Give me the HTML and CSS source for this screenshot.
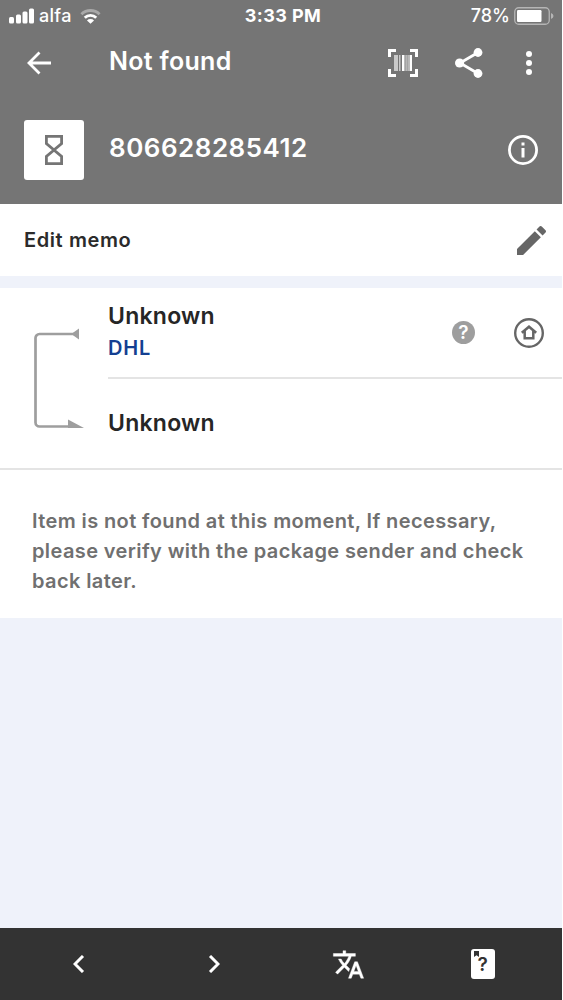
FILE: index.html
```html
<!DOCTYPE html>
<html lang="en">
<head>
    <meta charset="UTF-8">
    <meta name="viewport" content="width=device-width, initial-scale=1.0">
    <title>Not found</title>
    <link rel="stylesheet" href="styles.css">
</head>
<body>
    <div class="app">
        <header class="header">
            <div class="status-bar">
                <div class="carrier">
                    <svg width="26" height="16" viewBox="0 0 26 16" fill="#fff">
                        <rect x="0" y="9" width="5" height="6.5" rx="1.5"/>
                        <rect x="7" y="6.5" width="5" height="9" rx="1.5"/>
                        <rect x="13.5" y="3.5" width="5" height="12" rx="1.5"/>
                        <rect x="20" y="0.5" width="5" height="15" rx="1.5"/>
                    </svg>
                    <span class="carrier-name">alfa</span>
                    <svg class="wifi" width="21" height="16" viewBox="0 0 22 16" fill="none" stroke="#fff" stroke-width="3">
                        <path d="M1.5 6.2a13.5 13.5 0 0 1 19 0" stroke="#a9a9a9"/>
                        <path d="M5 9.8a8.5 8.5 0 0 1 12 0"/>
                        <path d="M7.3 12.6a5.3 5.3 0 0 1 7.4 0L11 16z" fill="#fff" stroke="none"/>
                    </svg>
                </div>
                <span class="clock">3:33 PM</span>
                <div class="battery">
                    <span class="battery-level">78%</span>
                    <svg width="40" height="18" viewBox="0 0 40 18">
                        <rect x="0.75" y="0.75" width="34.5" height="16.5" rx="4" fill="none" stroke="#b5b5b5" stroke-width="1.3"/>
                        <rect x="3" y="3" width="24.5" height="12" rx="1.2" fill="#fff"/>
                        <path d="M37 6q2.5 1 2.5 3t-2.5 3z" fill="#b5b5b5"/>
                    </svg>
                </div>
            </div>

            <div class="toolbar">
                <svg class="back" width="26" height="26" viewBox="0 0 26 26" fill="none" stroke="#fff" stroke-width="2.8">
                    <path d="M25 13H3M13.500 2.500L3 13l10.500 10.500"/>
                </svg>
                <h1 class="title">Not found</h1>
                <svg class="barcode" width="30" height="28" viewBox="0 0 30 28">
                    <path d="M1.5 8V1.5H8M22 1.5h6.5V8M28.5 20v6.5H22M8 26.5H1.5V20" fill="none" stroke="#fff" stroke-width="3"/>
                    <path d="M6 6h4v16H6zM11 6h1.5v16H11z" fill="#c9c9c9"/>
                    <path d="M14 6h2.5v16H14zM21.5 6H24v16h-2.5z" fill="#fff"/>
                    <path d="M17.5 6h1.2v16h-1.2zM19.5 6h1.2v16h-1.2z" fill="#d5d5d5"/>
                </svg>
                <svg class="share" width="28" height="30" viewBox="0 0 28 30" fill="#fff">
                    <path d="M23 4.5L5 15l18 10.5" fill="none" stroke="#fff" stroke-width="2.8"/>
                    <circle cx="23" cy="4.5" r="4.4"/>
                    <circle cx="4.6" cy="15" r="4.6"/>
                    <circle cx="23" cy="25.5" r="4.4"/>
                </svg>
                <svg class="more" width="6" height="26" viewBox="0 0 6 26" fill="#fff">
                    <circle cx="3" cy="4" r="3"/>
                    <circle cx="3" cy="13" r="3"/>
                    <circle cx="3" cy="22" r="3"/>
                </svg>
            </div>

            <div class="tracking">
                <div class="status-icon">
                    <svg width="18" height="30" viewBox="0 0 18 30" fill="none" stroke="#757575" stroke-width="2.8">
                        <path d="M1.4 1.4h15.2v7.2L9 15l7.6 6.4v7.2H1.4v-7.2L9 15 1.4 8.6z"/>
                    </svg>
                </div>
                <span class="number">806628285412</span>
                <svg class="info" width="30" height="30" viewBox="0 0 30 30">
                    <circle cx="15" cy="15" r="13.6" fill="none" stroke="#fff" stroke-width="2.8"/>
                    <path d="M13.5 7.5h3v3h-3zM13.5 13h3v9.500h-3z" fill="#fff"/>
                </svg>
            </div>
        </header>

        <div class="memo">
            <span>Edit memo</span>
            <svg width="29" height="29" viewBox="3 3 18 18" fill="#666">
                <path d="M3 17.25V21h3.75L17.81 9.94l-3.75-3.75L3 17.25zM20.71 7.04c.39-.39.39-1.02 0-1.41l-2.34-2.34c-.39-.39-1.02-.39-1.41 0l-1.83 1.83 3.75 3.75 1.83-1.83z"/>
            </svg>
        </div>

        <section class="route">
            <svg class="route-line" width="50" height="100" viewBox="0 0 50 100">
                <path d="M43 6H5.500a4 4 0 0 0-4 4V94.500a4 4 0 0 0 4 4H38" fill="none" stroke="#9e9e9e" stroke-width="2.700"/>
                <path d="M45 .5v11L39 7.300V4.700zM34 91.500l16 8.400H34z" fill="#9e9e9e"/>
            </svg>
            <div class="stops">
                <div class="stop origin">
                    <div class="stop-text">
                        <div class="place">Unknown</div>
                        <div class="courier">DHL</div>
                    </div>
                    <div class="help">?</div>
                    <svg class="home" width="30" height="30" viewBox="0 0 30 30" fill="none" stroke="#666">
                        <circle cx="15" cy="15" r="13.800" stroke-width="2.400"/>
                        <path d="M7.800 14.800L15 8.700l7.200 6.100M10.700 13v7.200h8.600V13" stroke-width="2.500"/>
                    </svg>
                </div>
                <div class="stop destination">
                    <div class="place">Unknown</div>
                </div>
            </div>
        </section>

        <p class="message">Item is not found at this moment, If necessary,<br>please verify with the package sender and check<br>back later.</p>

        <nav class="bottom-nav">
            <div class="nav-item">
                <svg width="12" height="18" viewBox="0 0 12 18" fill="none" stroke="#fff" stroke-width="3">
                    <path d="M10 1L2 9l8 8"/>
                </svg>
            </div>
            <div class="nav-item">
                <svg width="12" height="18" viewBox="0 0 12 18" fill="none" stroke="#fff" stroke-width="3">
                    <path d="M2 1l8 8-8 8"/>
                </svg>
            </div>
            <div class="nav-item">
                <svg width="33" height="33" viewBox="0 0 24 24" fill="#fff" stroke="#fff" stroke-width="0.3">
                    <path d="M12.87 15.07l-2.54-2.51.03-.03c1.74-1.94 2.98-4.17 3.71-6.53H17V4h-7V2H8v2H1v1.99h11.17C11.5 7.92 10.44 9.75 9 11.35 8.07 10.32 7.3 9.19 6.69 8h-2c.73 1.63 1.73 3.17 2.98 4.56l-5.09 5.02L4 19l5-5 3.11 3.11.76-2.04zM18.5 10h-2L12 22h2l1.12-3h4.75L21 22h2l-4.5-12zm-2.62 7l1.62-4.33L19.12 17h-3.24z"/>
                </svg>
            </div>
            <div class="nav-item">
                <div class="manual">
                    <svg class="bookmark" width="5" height="6" viewBox="0 0 5 6"><path d="M0 0h5v6L2.5 4.2 0 6z" fill="#333"/></svg>
                    ?
                </div>
            </div>
        </nav>
    </div>
</body>
</html>
```
FILE: styles.css
```css
body {
    margin: 0;
    background-color: #fff;
    font-family: Inter, "Liberation Sans", sans-serif;
    font-weight: 600;
}
svg {
    display: block;
    flex-shrink: 0;
}
.app {
    width: 562px;
    height: 1000px;
    display: flex;
    flex-direction: column;
    background-color: #eff2fa;
}

/* Header */
.header {
    height: 204px;
    background-color: #757575;
    color: #fff;
}
.status-bar {
    height: 31px;
    display: grid;
    grid-template-columns: 1fr auto 1fr;
    align-items: center;
    padding: 0 8px 0 9px;
    font-size: 18px;
}
.carrier, .battery {
    display: flex;
    align-items: center;
}
.carrier-name {
    margin-left: 4px;
    font-weight: 500;
    letter-spacing: 0.3px;
}
.wifi {
    margin-left: 8px;
}
.clock {
    font-weight: 700;
    letter-spacing: 0.4px;
    margin-left: 3px;
}
.battery {
    justify-content: flex-end;
}
.battery-level {
    font-weight: 500;
    margin-right: 4px;
}
.toolbar {
    height: 64px;
    display: flex;
    align-items: center;
    padding: 0 30px 0 26px;
}
.title {
    margin: -5px auto 0 57px;
    font-size: 25px;
    font-weight: 600;
    letter-spacing: 0.3px;
}
.share {
    margin: 0 43px 0 37px;
}
.tracking {
    height: 60px;
    margin-top: 25px;
    padding: 0 24px;
    display: flex;
    align-items: center;
}
.status-icon {
    width: 60px;
    height: 60px;
    border-radius: 3px;
    background-color: #fff;
    display: flex;
    align-items: center;
    justify-content: center;
}
.number {
    margin: -5px auto 0 25px;
    font-size: 26px;
    font-weight: 600;
    letter-spacing: 0.5px;
}

/* Memo row */
.memo {
    height: 72px;
    box-sizing: border-box;
    padding: 0 16px 0 24px;
    display: flex;
    align-items: center;
    justify-content: space-between;
    background-color: #fff;
    color: #2b2b2b;
    font-size: 20px;
    letter-spacing: 0.6px;
}

/* Route */
.route {
    height: 182px;
    margin-top: 12px;
    box-sizing: border-box;
    border-bottom: 2px solid #e4e4e4;
    display: flex;
    align-items: center;
    background-color: #fff;
}
.route-line {
    margin: 0 24px 0 34px;
}
.stops {
    flex: 1;
    height: 100%;
}
.stop {
    height: 90px;
    display: flex;
    align-items: center;
}
.origin {
    height: 91px;
    box-sizing: border-box;
    border-bottom: 2px solid #e4e4e4;
    padding-right: 18px;
}
.destination {
    height: 87px;
}
.stop-text {
    margin: -1px auto 0 0;
}
.place {
    color: #262626;
    font-size: 23px;
    line-height: 32px;
    letter-spacing: 0.25px;
}
.courier {
    color: #143f91;
    font-size: 20px;
    line-height: 32px;
    letter-spacing: 0.8px;
}
.help {
    width: 23px;
    height: 23px;
    margin-right: 39px;
    border-radius: 50%;
    background-color: #9e9e9e;
    color: #fff;
    font-size: 19px;
    line-height: 23px;
    text-align: center;
}

/* Message */
.message {
    height: 148px;
    box-sizing: border-box;
    margin: 0;
    padding: 36px 0 0 32px;
    background-color: #fff;
    color: #707070;
    font-size: 20px;
    line-height: 30px;
    letter-spacing: 0.39px;
    white-space: nowrap;
}

/* Bottom navigation */
.bottom-nav {
    height: 72px;
    margin-top: auto;
    padding: 0 12px;
    display: flex;
    background-color: #333;
}
.nav-item {
    flex: 1;
    display: flex;
    align-items: center;
    justify-content: center;
}
.manual {
    position: relative;
    width: 24px;
    height: 30px;
    border-radius: 3px;
    background-color: #fff;
    color: #333;
    font-size: 19px;
    line-height: 31px;
    text-align: center;
}
.bookmark {
    position: absolute;
    top: 2px;
    left: 3px;
}
```
